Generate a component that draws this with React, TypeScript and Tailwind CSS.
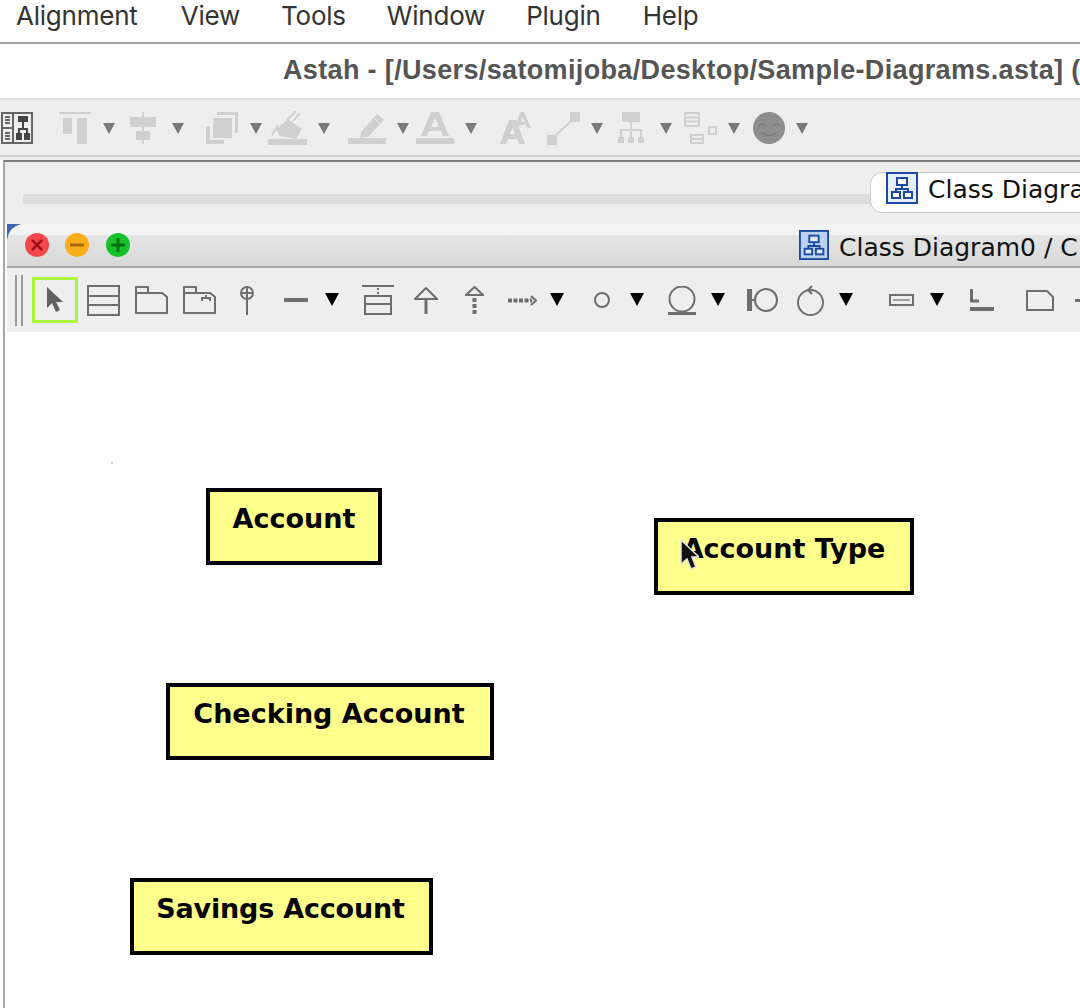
const Caret = ({ className }: { className: string }) => (
  <svg width="12" height="12" viewBox="0 0 12 12" className={className}>
    <path d="M0 1H12L6 12Z" fill="#797979" />
  </svg>
);

const BlackCaret = ({ className }: { className: string }) => (
  <svg width="14" height="14" viewBox="0 0 14 14" className={className}>
    <path d="M0 1H14L7 14Z" fill="#000" />
  </svg>
);

const DiagramIcon = ({ className, soft }: { className: string; soft?: boolean }) => (
  <svg width="32" height="32" viewBox="0 0 32 32" className={className}>
    <rect x="1" y="1" width="30" height="30" fill={soft ? '#bcd0f0' : '#e6eefb'} stroke="#1c4aa0" strokeWidth="2" />
    <g fill={soft ? '#dfe9f9' : '#fff'} stroke="#1c4aa0" strokeWidth="2">
      <rect x="11" y="6" width="10" height="7" />
      <rect x="6" y="20" width="8" height="6" />
      <rect x="18" y="20" width="8" height="6" />
      <path d="M16 13V17M10 20V17H22V20" fill="none" />
    </g>
  </svg>
);

const TOP_ICON = '#d0d0d0';

const topIcons = {
  layout: (
    <svg width="32" height="32" viewBox="0 0 32 32" className="ml-px">
      <rect x="1" y="1" width="30" height="30" fill="#eee" stroke="#666" strokeWidth="2" />
      <path d="M12 1V31M1 16H12" stroke="#666" strokeWidth="2" />
      <path d="M4 5H9M4 8H9M4 11H9M4 21H9M4 24H9M4 27H9" stroke="#666" strokeWidth="2" />
      <rect x="17" y="4" width="10" height="6" fill="#444" />
      <rect x="15" y="21" width="6" height="7" fill="#444" />
      <rect x="23" y="21" width="6" height="7" fill="#444" />
      <path d="M22 10V17M18 21V17H26V21" stroke="#444" strokeWidth="2" fill="none" />
    </svg>
  ),
  alignTop: (
    <svg width="32" height="32" viewBox="0 0 32 32" className="ml-[26px]">
      <rect y="0" width="32" height="2" fill={TOP_ICON} />
      <rect x="4" y="6" width="9" height="16" fill={TOP_ICON} />
      <rect x="18" y="6" width="10" height="26" fill={TOP_ICON} />
    </svg>
  ),
  alignCenter: (
    <svg width="26" height="32" viewBox="0 0 26 32" className="ml-[15px]">
      <rect x="12" y="0" width="2" height="32" fill={TOP_ICON} />
      <rect x="0" y="5" width="26" height="10" fill={TOP_ICON} />
      <rect x="6" y="19" width="14" height="9" fill={TOP_ICON} />
    </svg>
  ),
  copy: (
    <svg width="32" height="32" viewBox="0 0 32 32" className="ml-[22px]">
      <path d="M11 0H32V21H29V3H11Z" fill={TOP_ICON} />
      <rect x="7" y="6" width="19" height="20" fill={TOP_ICON} />
      <path d="M0 14H4V28H18V32H0Z" fill={TOP_ICON} />
    </svg>
  ),
  paint: (
    <svg width="39" height="34" viewBox="0 0 39 34" className="ml-[6px]">
      <path d="M8 18L20 8L34 18L28 28L12 25Z" fill={TOP_ICON} />
      <path d="M19 9L28 0M25 10L32 2" stroke={TOP_ICON} strokeWidth="2" fill="none" />
      <path d="M4 24L10 14" stroke={TOP_ICON} strokeWidth="2" />
      <rect x="0" y="28" width="39" height="6" fill={TOP_ICON} />
    </svg>
  ),
  pen: (
    <svg width="38" height="32" viewBox="0 0 38 32" className="ml-[18px]">
      <path d="M13 20L29 2L36 8L20 25L12 26Z" fill={TOP_ICON} />
      <path d="M26 6L32 12" stroke="#eee" strokeWidth="1" />
      <rect x="0" y="26" width="38" height="6" fill={TOP_ICON} />
    </svg>
  ),
  letter: (
    <svg width="38" height="32" viewBox="0 0 38 32" className="ml-[7px]">
      <path d="M15 0H23L33 24H27L25 19H13L11 24H5ZM19 6L15 15H23Z" fill={TOP_ICON} fillRule="evenodd" />
      <rect x="0" y="26" width="38" height="6" fill={TOP_ICON} />
    </svg>
  ),
  letters: (
    <svg width="31" height="32" viewBox="0 0 31 32" className="ml-[23px]">
      <path d="M9 8H16L25 32H19L17 27H8L6 32H0ZM12.5 15L10 22H15Z" fill={TOP_ICON} fillRule="evenodd" />
      <path d="M20 0H24L31 16H27.5L26 13H20L19 15L17 10ZM22.5 5L21 10H25Z" fill={TOP_ICON} fillRule="evenodd" />
    </svg>
  ),
  connector: (
    <svg width="33" height="33" viewBox="0 0 33 33" className="ml-4">
      <rect x="0" y="23" width="10" height="10" fill={TOP_ICON} />
      <rect x="23" y="0" width="10" height="10" fill={TOP_ICON} />
      <path d="M6 26L27 6" stroke={TOP_ICON} strokeWidth="2" />
    </svg>
  ),
  hierarchy: (
    <svg width="26" height="32" viewBox="0 0 26 32" className="ml-[15px]">
      <rect x="4" y="0" width="18" height="10" fill={TOP_ICON} />
      <path d="M13 10V26M3 26V18H23V26" stroke={TOP_ICON} strokeWidth="2" fill="none" />
      <rect x="0" y="25" width="6" height="6" fill={TOP_ICON} />
      <rect x="10" y="25" width="6" height="6" fill={TOP_ICON} />
      <rect x="20" y="25" width="6" height="6" fill={TOP_ICON} />
    </svg>
  ),
  list: (
    <svg width="33" height="32" viewBox="0 0 33 32" className="ml-3">
      <g fill="none" stroke={TOP_ICON} strokeWidth="2">
        <rect x="1" y="1" width="14" height="13" />
        <path d="M1 5.5H15M1 9.5H15" />
        <rect x="7" y="23" width="12" height="8" />
        <path d="M7 27H19" />
        <rect x="25" y="15" width="7" height="7" />
      </g>
    </svg>
  ),
  smiley: (
    <svg width="32" height="32" viewBox="0 0 32 32" className="ml-[13px]">
      <circle cx="16" cy="16" r="16" fill="#8e8e8e" />
      <path d="M6 14Q9 10 12 14M20 14Q23 10 26 14M8 20Q16 27 24 20" stroke="#7c7c7c" strokeWidth="1.5" fill="none" />
    </svg>
  ),
};

const S = '#6e6e6e';

const drawIcons = {
  classBox: (
    <svg width="33" height="31" viewBox="0 0 33 31" className="ml-[9px]">
      <rect x="1" y="1" width="31" height="29" fill="none" stroke={S} strokeWidth="2" />
      <path d="M1 11H32M1 20H32" stroke={S} strokeWidth="2" />
    </svg>
  ),
  folder: (
    <svg width="33" height="28" viewBox="0 0 33 28" className="ml-[15px]">
      <path d="M1 27V1H13V7H27L32 11V27Z" fill="none" stroke={S} strokeWidth="2" />
      <path d="M1 7H13" stroke={S} strokeWidth="2" />
    </svg>
  ),
  folderSub: (
    <svg width="33" height="28" viewBox="0 0 33 28" className="ml-[15px]">
      <path d="M1 27V1H13V7H27L32 11V27Z" fill="none" stroke={S} strokeWidth="2" />
      <path d="M1 7H13M19 15V12H27V15M23 9V12" stroke={S} strokeWidth="2" fill="none" />
    </svg>
  ),
  pin: (
    <svg width="14" height="29" viewBox="0 0 14 29" className="ml-6">
      <circle cx="7" cy="7" r="6" fill="none" stroke={S} strokeWidth="2" />
      <path d="M7 1V29M1 7H13" stroke={S} strokeWidth="2" />
    </svg>
  ),
  line: (
    <svg width="24" height="4" viewBox="0 0 24 4" className="ml-[30px]">
      <rect width="24" height="4" fill={S} />
    </svg>
  ),
  lollipopBox: (
    <svg width="32" height="30" viewBox="0 0 32 30" className="ml-[23px]">
      <path d="M0 1H32" stroke={S} strokeWidth="2" />
      <path d="M16 3V9" stroke={S} strokeWidth="2" strokeDasharray="2 2" />
      <rect x="3" y="11" width="26" height="18" fill="none" stroke={S} strokeWidth="2" />
      <path d="M3 19H29" stroke={S} strokeWidth="2" />
    </svg>
  ),
  generalize: (
    <svg width="24" height="27" viewBox="0 0 24 27" className="ml-5">
      <path d="M12 1L23 12H1Z" fill="none" stroke={S} strokeWidth="2" />
      <path d="M12 12V27" stroke={S} strokeWidth="3" />
    </svg>
  ),
  dashGeneralize: (
    <svg width="19" height="28" viewBox="0 0 19 28" className="ml-[27px]">
      <path d="M9.5 1L18 9H1Z" fill="none" stroke={S} strokeWidth="2" />
      <path d="M9.5 12V28" stroke={S} strokeWidth="4" strokeDasharray="4 2" />
    </svg>
  ),
  dashArrow: (
    <svg width="29" height="11" viewBox="0 0 29 11" className="ml-6">
      <path d="M0 5.5H24" stroke={S} strokeWidth="4" strokeDasharray="4 1.5" />
      <path d="M23 1L28 5.5L23 10" stroke={S} strokeWidth="2" fill="none" />
    </svg>
  ),
  circle: (
    <svg width="16" height="16" viewBox="0 0 16 16" className="ml-[30px]">
      <circle cx="8" cy="8" r="7" fill="none" stroke={S} strokeWidth="2" />
    </svg>
  ),
  circleBase: (
    <svg width="28" height="29" viewBox="0 0 28 29" className="ml-[24px]">
      <circle cx="14" cy="13" r="12.5" fill="none" stroke={S} strokeWidth="2" />
      <rect x="0" y="26" width="28" height="3" fill={S} />
    </svg>
  ),
  circleBar: (
    <svg width="31" height="24" viewBox="0 0 31 24" className="ml-[22px]">
      <rect x="0" y="1" width="5" height="22" fill={S} />
      <path d="M5 12H9" stroke={S} strokeWidth="2" />
      <circle cx="19" cy="12" r="11" fill="none" stroke={S} strokeWidth="2" />
    </svg>
  ),
  circleLoop: (
    <svg width="27" height="31" viewBox="0 0 27 31" className="ml-[19px]">
      <circle cx="13.5" cy="17.5" r="12.5" fill="none" stroke={S} strokeWidth="2" />
      <path d="M15 1L11 5L15 9" stroke={S} strokeWidth="2" fill="none" />
    </svg>
  ),
  slot: (
    <svg width="25" height="12" viewBox="0 0 25 12" className="ml-[36px]">
      <rect x="1" y="1" width="23" height="10" fill="none" stroke={S} strokeWidth="2" />
      <path d="M4 6H21" stroke="#a0a0a0" strokeWidth="2" />
    </svg>
  ),
  label: (
    <svg width="24" height="22" viewBox="0 0 24 22" className="ml-[26px]">
      <path d="M1.5 0V12H9" stroke={S} strokeWidth="3" fill="none" />
      <rect x="0" y="18" width="24" height="4" fill={S} />
    </svg>
  ),
  note: (
    <svg width="28" height="21" viewBox="0 0 28 21" className="ml-[32px]">
      <path d="M1 1H21L27 7V20H1Z" fill="none" stroke={S} strokeWidth="2" />
    </svg>
  ),
  dot: (
    <svg width="5" height="3" viewBox="0 0 5 3" className="ml-[21px]">
      <rect width="5" height="3" fill={S} />
    </svg>
  ),
};

const ClassNode = ({ name, className }: { name: string; className: string }) => (
  <div
    className={`absolute h-[77px] border-4 border-black bg-[#ffff8c] pt-[11px] text-center font-['DejaVu_Sans',sans-serif] text-[27px] leading-[32px] font-bold text-black ${className}`}
  >
    {name}
  </div>
);

export default function App() {
  return (
    <div className="flex h-[1008px] w-[1080px] flex-col overflow-hidden bg-white">
      {/* mac menu bar */}
      <div className="flex h-[44px] items-start border-b-2 border-[#a5a5a5] pl-4 pt-px font-['Inter',sans-serif] text-[26px] leading-[30px] tracking-[-0.22px] text-[#333]">
        <span>Alignment</span>
        <span className="ml-[43px]">View</span>
        <span className="ml-[41px]">Tools</span>
        <span className="ml-[41px]">Window</span>
        <span className="ml-[41px]">Plugin</span>
        <span className="ml-[42px]">Help</span>
      </div>

      <div className="h-[56px] whitespace-nowrap border-b-2 border-[#dddddd] pl-[283px] pt-[10px] font-['Liberation_Sans',sans-serif] text-[27px] leading-[32px] font-bold tracking-[0.35px] text-[#555]">
        Astah - [/Users/satomijoba/Desktop/Sample-Diagrams.asta] (
      </div>

      {/* disabled main toolbar */}
      <div className="flex h-[57px] shrink-0 items-start border-b-2 border-[#cfcfcf] bg-[#eeeeee] pt-[11px]">
        <div className="flex items-center">
          {topIcons.layout}
          {topIcons.alignTop}
          <Caret className="ml-3" />
          {topIcons.alignCenter}
          <Caret className="ml-4" />
          {topIcons.copy}
          <Caret className="ml-3" />
          {topIcons.paint}
          <Caret className="ml-[11px]" />
          {topIcons.pen}
          <Caret className="ml-[11px]" />
          {topIcons.letter}
          <Caret className="ml-[11px]" />
          {topIcons.letters}
          {topIcons.connector}
          <Caret className="ml-[11px]" />
          {topIcons.hierarchy}
          <Caret className="ml-4" />
          {topIcons.list}
          <Caret className="ml-[11px]" />
          {topIcons.smiley}
          <Caret className="ml-[11px]" />
        </div>
      </div>
      <div className="h-[3px] shrink-0 bg-[#eeeeee]" />

      <div className="ml-[3px] flex min-h-0 flex-1 flex-col border-l-2 border-t-2 border-l-[#a8a8a8] border-t-[#7d7d7d]">
        {/* tab strip */}
        <div className="flex h-[62px] shrink-0 items-start bg-[#eeeeee] pl-[18px] pt-[10px]">
          <div className="mt-[22px] h-[10px] w-[847px] shrink-0 bg-[#dddddd]" />
          <div className="flex h-[41px] w-[300px] shrink-0 items-start rounded-l-[12px] border border-[#c8c8c8] bg-white pl-[15px]">
            <DiagramIcon className="-mt-px" />
            <span className="ml-[10px] mt-px whitespace-nowrap font-['DejaVu_Sans',sans-serif] text-[25px] leading-[32px] text-[#111]">
              Class Diagram0
            </span>
          </div>
        </div>

        {/* inner window title */}
        <div className="relative ml-[2px] h-[44px] shrink-0 border-b-2 border-[#a9a9a9] bg-gradient-to-b from-[#f3f3f3] from-[27%] via-[#e4e4e4] via-[27%] to-[#d9d9d9] pl-[18px]">
          <svg width="14" height="16" viewBox="0 0 14 16" className="absolute left-0 top-0">
            <path d="M0 0H14Q2 3 0 16Z" fill="#3e66ae" />
          </svg>
          <div className="flex h-[42px] items-center">
            <svg width="24" height="24" viewBox="0 0 24 24">
              <circle cx="12" cy="12" r="12" fill="#f5474b" />
              <path d="M7 7L17 17M17 7L7 17" stroke="#9c1218" strokeWidth="2.5" />
            </svg>
            <svg width="24" height="24" viewBox="0 0 24 24" className="ml-4">
              <circle cx="12" cy="12" r="12" fill="#fbae1c" />
              <path d="M5 12H19" stroke="#a86a08" strokeWidth="3" />
            </svg>
            <svg width="24" height="24" viewBox="0 0 24 24" className="ml-[17px]">
              <circle cx="12" cy="12" r="12" fill="#16c22a" />
              <path d="M5 12H19M12 5V19" stroke="#0a6e14" strokeWidth="3" />
            </svg>
            <DiagramIcon soft className="ml-[669px] h-[30px] w-[30px]" />
            <span className="ml-[10px] mt-[6px] whitespace-nowrap font-['DejaVu_Sans',sans-serif] text-[25px] leading-[32px] text-[#111]">
              Class Diagram0 / C
            </span>
          </div>
        </div>

        {/* diagram toolbar */}
        <div className="ml-[2px] flex h-[64px] shrink-0 items-center bg-[#eeeeee] pl-[8px]">
          <div className="h-[51px] w-[8px] shrink-0 border-x-2 border-[#9a9a9a]" />
          <div className="ml-[9px] flex h-[46px] w-[46px] shrink-0 items-center justify-center border-[3px] border-[#a9f53a]">
            <svg width="18" height="26" viewBox="0 0 18 26">
              <path d="M1 0V21L6 16L10 25L14 23L10 15H17Z" fill="#5f5f5f" />
            </svg>
          </div>
          {drawIcons.classBox}
          {drawIcons.folder}
          {drawIcons.folderSub}
          {drawIcons.pin}
          {drawIcons.line}
          <BlackCaret className="ml-[17px] -mt-[2px]" />
          {drawIcons.lollipopBox}
          {drawIcons.generalize}
          {drawIcons.dashGeneralize}
          {drawIcons.dashArrow}
          <BlackCaret className="ml-[13px] -mt-[2px]" />
          {drawIcons.circle}
          <BlackCaret className="ml-[20px] -mt-[2px]" />
          {drawIcons.circleBase}
          <BlackCaret className="ml-[15px] -mt-[2px]" />
          {drawIcons.circleBar}
          {drawIcons.circleLoop}
          <BlackCaret className="ml-[15px] -mt-[2px]" />
          {drawIcons.slot}
          <BlackCaret className="ml-[16px] -mt-[2px]" />
          {drawIcons.label}
          {drawIcons.note}
          {drawIcons.dot}
        </div>

        {/* canvas, y origin 332 x origin 7 */}
        <div className="relative ml-[2px] min-h-0 flex-1 bg-white">
          <div className="absolute left-[104px] top-[130px] h-[2px] w-[2px] bg-[#c5d5ea]" />
          <ClassNode name="Account" className="left-[199px] top-[156px] w-[176px]" />
          <ClassNode name="Account Type" className="left-[647px] top-[186px] w-[260px]" />
          <ClassNode name="Checking Account" className="left-[159px] top-[351px] w-[328px] pr-[2px]" />
          <ClassNode name="Savings Account" className="left-[123px] top-[546px] w-[303px] pr-[2px] tracking-[-0.2px]" />
          <svg width="20" height="32" viewBox="0 0 20 32" className="absolute left-[672px] top-[206px]">
            <path d="M2 2V26L8 21L12 31L17 29L13 19H20Z" fill="#111" stroke="#e6e6e6" strokeWidth="1.5" />
          </svg>
        </div>
      </div>
    </div>
  );
}
